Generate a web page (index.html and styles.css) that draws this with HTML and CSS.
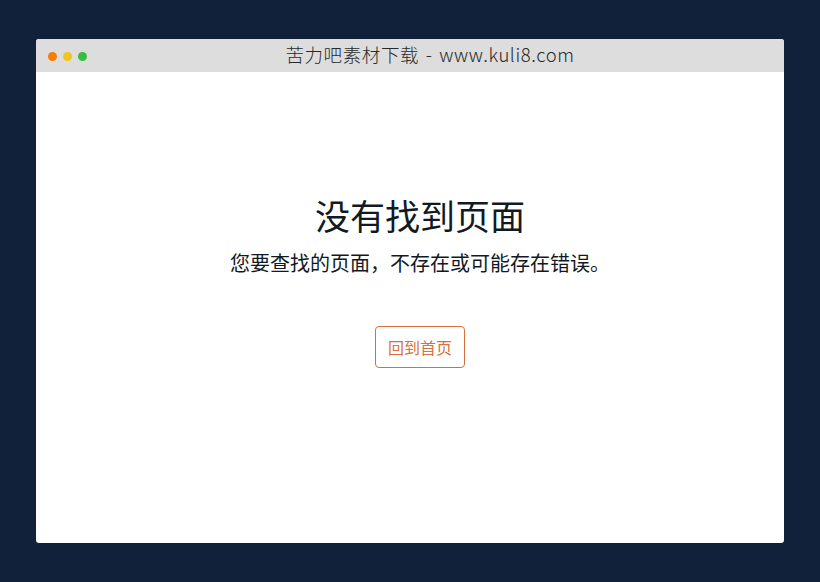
FILE: index.html
```html
<!DOCTYPE html>
<html lang="zh">
<head>
<meta charset="utf-8">
<title>404</title>
<link rel="stylesheet" href="styles.css">
</head>
<body>
<div class="window">
  <div class="titlebar">
    <div class="dots">
      <span class="dot orange"></span>
      <span class="dot yellow"></span>
      <span class="dot green"></span>
    </div>
    <div class="title">苦力吧素材下载 - www.kuli8.com</div>
  </div>
  <div class="content">
    <h1 class="heading">没有找到页面</h1>
    <p class="sub">您要查找的页面，不存在或可能存在错误。</p>
    <a class="btn" href="#">回到首页</a>
  </div>
</div>
</body>
</html>
```
FILE: styles.css
```css
html, body {
  margin: 0;
  padding: 0;
  background: #112139;
  height: 100%;
}
body {
  font-family: "Noto Sans CJK SC", "DejaVu Sans", sans-serif;
  padding: 39px 37px 0 36px;
  box-sizing: border-box;
}
.window {
  width: 748px;
  height: 504px;
  background: #ffffff;
  border-radius: 3px;
  overflow: hidden;
  display: flex;
  flex-direction: column;
}
.titlebar {
  height: 33px;
  background: #dddddd;
  display: flex;
  align-items: center;
  position: relative;
}
.dots {
  display: flex;
  gap: 6px;
  padding-left: 12px;
  padding-top: 1px;
}
.dot {
  width: 9px;
  height: 9px;
  border-radius: 50%;
  display: block;
}
.orange { background: #f57d0c; }
.yellow { background: #f0c51c; }
.green { background: #37bc3f; }
.title {
  position: absolute;
  left: 40px;
  right: 0;
  text-align: center;
  font-size: 18.5px;
  color: #2a2a2a;
  font-family: "Noto Sans CJK SC", sans-serif;
  font-weight: 300;
  letter-spacing: 0.6px;
  word-spacing: 2px;
  top: 2px;
}
.content {
  display: flex;
  flex-direction: column;
  align-items: center;
  padding-top: 118px;
  padding-left: 20px;
}
.heading {
  margin: 0;
  font-weight: normal;
  font-size: 35px;
  line-height: 50px;
  color: #111a24;
}
.sub {
  margin: 8px 0 0;
  font-size: 20px;
  line-height: 30px;
  color: #111a24;
}
.btn {
  margin-top: 48px;
  width: 90px;
  height: 42px;
  box-sizing: border-box;
  border: 1px solid #d9703c;
  border-radius: 4px;
  color: #d9703c;
  text-decoration: none;
  font-size: 16px;
  display: flex;
  align-items: center;
  justify-content: center;
}
```
